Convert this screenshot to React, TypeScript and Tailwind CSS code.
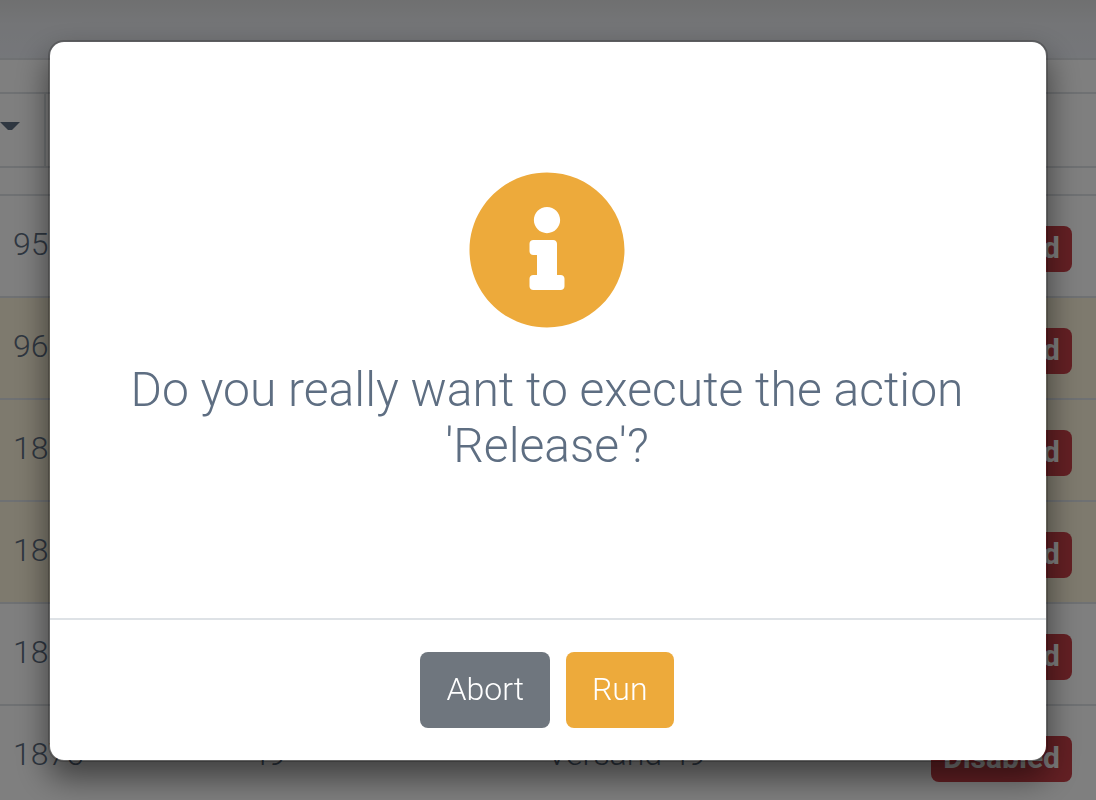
import { FaInfoCircle } from "react-icons/fa";

type Row = {
  id: string;
  number?: string;
  shipping?: string;
  highlighted?: boolean;
};

const rows: Row[] = [
  { id: "95" },
  { id: "96", highlighted: true },
  { id: "18", highlighted: true },
  { id: "18", highlighted: true },
  { id: "18" },
  { id: "1876", number: "49", shipping: "Versand 49" },
];

function StatusBadge() {
  return (
    <span className="inline-block rounded-lg bg-[#c84048] px-3 pb-0.5 text-[30px] leading-[44px] font-bold text-white">
      Disabled
    </span>
  );
}

function FilterBar() {
  return (
    <div className="pt-8 pb-[26px]">
      <div className="flex h-[76px] w-full gap-0.5 border-y-2 border-[#dee2e6]">
        <button
          type="button"
          aria-label="Open filter"
          className="flex w-[46px] items-center border-r-2 border-[#dee2e6]"
        >
          <svg viewBox="0 0 20 8" className="mb-2 h-2 w-5 fill-[#5e6e82]" aria-hidden="true">
            <path d="M0 0H20L12 8H8Z" />
          </svg>
        </button>
        <div className="flex-1" />
      </div>
    </div>
  );
}

function DataTable() {
  return (
    <table className="w-full table-fixed border-collapse text-left text-[32px] leading-[48px] font-light text-[#5e6e82]">
      <colgroup>
        <col className="w-[237px]" />
        <col className="w-[297px]" />
        <col />
        <col className="w-[18%]" />
      </colgroup>
      <tbody>
        {rows.map((row, index) => (
          <tr
            key={index}
            className={
              row.highlighted
                ? "h-[102px] border-t-2 border-[#dee2e6] bg-[#fdf4dc] align-top"
                : "h-[102px] border-t-2 border-[#dee2e6] align-top"
            }
          >
            <td className="px-[13px] pt-6">{row.id}</td>
            <td className="px-[13px] pt-6">{row.number}</td>
            <td className="px-[13px] pt-6">{row.shipping}</td>
            <td className="pt-[30px] pr-6">
              <div className="flex justify-end">
                <StatusBadge />
              </div>
            </td>
          </tr>
        ))}
      </tbody>
    </table>
  );
}

function ConfirmDialog() {
  return (
    <div className="fixed inset-0 overflow-hidden bg-black/50 px-12 pt-10">
      <div
        role="dialog"
        aria-modal="true"
        aria-labelledby="confirm-title"
        className="rounded-2xl border-2 border-black/20 bg-white bg-clip-padding shadow-[0_16px_32px_rgba(0,0,0,0.5)]"
      >
        <div className="flex flex-col items-center pt-32 pr-[34px] pb-36 pl-8">
          <FaInfoCircle className="size-40 text-[#edaa3b]" aria-hidden="true" />
          <h2
            id="confirm-title"
            className="mt-8 text-center text-5xl leading-[56px] font-light text-[#5e6e82]"
          >
            Do you really want to execute the action 'Release'?
          </h2>
        </div>
        <div className="flex justify-center gap-4 border-t-2 border-[#dee2e6] py-8 pr-[34px] pl-8 text-[32px] leading-[48px] font-light text-white">
          <button type="button" className="rounded-lg bg-[#6f767e] px-[26px] pt-[13px] pb-[15px]">
            Abort
          </button>
          <button type="button" className="rounded-lg bg-[#edaa3b] px-[26px] pt-[13px] pb-[15px]">
            Run
          </button>
        </div>
      </div>
    </div>
  );
}

export default function App() {
  return (
    <div className="h-screen overflow-hidden bg-white font-[Roboto,sans-serif]">
      <header className="h-[60px] border-b-2 border-[#dfe2e6] bg-linear-to-b from-[#dfe0e1] via-[#e8eaee] via-40% to-[#ebeef5]" />
      <main>
        <FilterBar />
        <DataTable />
      </main>
      <ConfirmDialog />
    </div>
  );
}
